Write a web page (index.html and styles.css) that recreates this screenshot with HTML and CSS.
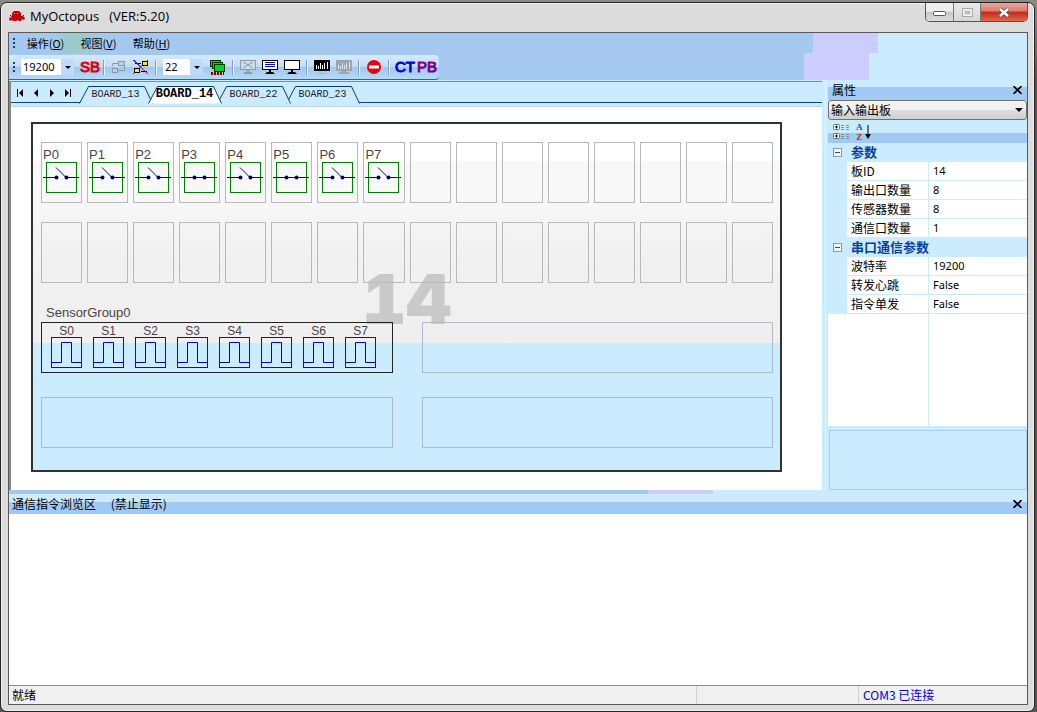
FILE: index.html
```html
<!DOCTYPE html>
<html lang="zh-CN">
<head>
<meta charset="utf-8">
<title>MyOctopus</title>
<link rel="stylesheet" href="styles.css">
</head>
<body>
<svg class="defs" aria-hidden="true">
  <symbol id="sw-open" viewBox="0 0 36 31">
    <rect x="3.5" y="0.5" width="30" height="30" fill="none" stroke="#008000"/>
    <path d="M0 15.5H13M23 15.5H36M13 5.5L23 15.5" fill="none" stroke="#0000a8"/>
    <circle cx="13.5" cy="15.5" r="2" fill="#000060"/><circle cx="23.5" cy="15.5" r="2" fill="#000060"/>
  </symbol>
  <symbol id="sw-closed" viewBox="0 0 36 31">
    <rect x="3.5" y="0.5" width="30" height="30" fill="none" stroke="#008000"/>
    <path d="M0 15.5H36" stroke="#0000a8"/>
    <circle cx="13.5" cy="15.5" r="2" fill="#000060"/><circle cx="23.5" cy="15.5" r="2" fill="#000060"/>
  </symbol>
  <symbol id="pulse" viewBox="0 0 31 31">
    <rect x="0.5" y="0.5" width="30" height="30" fill="none" stroke="#222"/>
    <path d="M1 25.5H10.5V5.5H20.5V25.5H30" fill="none" stroke="#0000d0"/>
  </symbol>
  <symbol id="tab" viewBox="0 0 75 18">
    <path d="M1.5 17.5L10.5 0.5H66.5L74.5 17.5" stroke="#003c8c"/>
  </symbol>
</svg>
<div class="window">
  <header class="titlebar">
    <svg class="logo" width="16" height="12" viewBox="0 0 16 12">
      <path d="M5 1h5l2 2v3h2l2 2-1 2-2-1-1 2h-2l-1-1-2 1H4l-1-1-2 1-1-2 1-2 2 1V3z" fill="#c8000c"/>
      <path d="M1 5l2 2M15 5l-2 2M3 10l2-2M8 10V8M12 10l-2-2" stroke="#800008" fill="none"/>
      <path d="M5 3h1v1H5zM8 3h1v1H8z" fill="#fff"/>
    </svg>
    <h1>MyOctopus &nbsp; (VER:5.20)</h1>
    <div class="winbtns">
      <button class="wb" aria-label="最小化"><svg width="13" height="5"><rect x=".5" y=".5" width="12" height="4" rx="1" fill="#fff" stroke="#555"/></svg></button>
      <button class="wb wb-max" aria-label="最大化"><svg width="11" height="9"><rect x=".5" y=".5" width="10" height="8" fill="#eee" stroke="#aaa"/><rect x="3.5" y="3.5" width="4" height="2" fill="#ddd" stroke="#aaa"/></svg></button>
      <button class="wb wb-close" aria-label="关闭"><svg width="12" height="11" viewBox="0 0 12 11"><path d="M2 2l8 7M10 2l-8 7" stroke="#5b4a4a" stroke-width="4"/><path d="M2 2l8 7M10 2l-8 7" stroke="#fff" stroke-width="2.4"/></svg></button>
    </div>
  </header>
  <div class="client">
    <nav class="menubar">
      <span class="grip"></span>
      <button>操作(<u>O</u>)</button>
      <button>视图(<u>V</u>)</button>
      <button>帮助(<u>H</u>)</button>
    </nav>
    <div class="toolrow">
      <div class="toolbar">
        <span class="grip"></span>
        <div class="combo wide"><select aria-label="波特率"><option>19200</option></select><span class="arrow"></span></div>
        <button class="txt red">SB</button>
        <span class="sep"></span>
        <button aria-label="连接"><svg width="16" height="16"><g fill="#c4d0dc" stroke="#8b98a8"><rect x="7.5" y="2.5" width="6" height="4"/><rect x="1.5" y="9.5" width="5" height="4"/></g><path d="M2 4.500h5M1.500 7v-2.500M13.500 7v4.500h-6" fill="none" stroke="#8b98a8"/></svg></button>
        <button aria-label="断开"><svg width="16" height="16"><path d="M2 4.500h6M8 12.500h6" stroke="#000"/><path d="M0 1l15 14M15 1L0 15" stroke="#d00020"/><path d="M1 1l7 7" stroke="#2020c0"/><rect x="9.500" y="2.500" width="5" height="4" fill="#ffe800" stroke="#000"/><rect x="1.500" y="9.500" width="5" height="4" fill="#ffe800" stroke="#000"/></svg></button>
        <span class="sep"></span>
        <div class="combo"><select aria-label="板号"><option>22</option></select><span class="arrow"></span></div>
        <button aria-label="板卡"><svg width="16" height="16"><g fill="#00d818" stroke="#003800"><rect x=".5" y="1.500" width="10" height="6"/><rect x="2.500" y="3.500" width="10" height="6"/><rect x="4.500" y="5.500" width="10" height="7"/></g><path d="M1 14.500h13" stroke="#900000" stroke-width="3" stroke-dasharray="2 1"/></svg></button>
        <span class="sep"></span>
        <button aria-label="清除"><svg width="16" height="16"><rect x=".5" y="1.500" width="15" height="9" fill="#cbdde9" stroke="#8c9aa5"/><path d="M3 3l10 6M13 3L3 9M7 11v2h2v-2" fill="none" stroke="#8c9aa5"/><path d="M5 13h6l2 2H3z" fill="#8c9aa5"/></svg></button>
        <button aria-label="显示"><svg width="16" height="16"><rect x=".5" y="1.500" width="15" height="9" fill="#fff" stroke="#000"/><path d="M3 3.500h10M3 5.500h10M3 7.500h10" stroke="#0000d0"/><path d="M7 11h2v2h2l2 2H3l2-2h2z" fill="#000"/></svg></button>
        <button aria-label="空屏"><svg width="16" height="16"><rect x=".5" y="1.500" width="15" height="9" fill="#fff" stroke="#000"/><path d="M7 11h2v2h2l2 2H3l2-2h2z" fill="#000"/></svg></button>
        <span class="sep"></span>
        <button aria-label="波形"><svg width="16" height="16"><path d="M0 1h16v11H0z"/><path d="M2.500 10V6M4.500 10V7M6.500 10V4M8.500 10V6M10.500 10V4M13.500 10V3" stroke="#fff"/><path d="M4 14.500h8" stroke="#a8b6c8"/></svg></button>
        <button aria-label="停止波形"><svg width="16" height="16"><path d="M0 1h16v11H0zM6 12h4v1h3v2H3v-2h3z" fill="#9aa5b2"/><path d="M2.500 10V6M4.500 10V7M6.500 10V4M8.500 10V6M10.500 10V4M13.500 10V3" stroke="#dce8f0"/></svg></button>
        <span class="sep"></span>
        <button aria-label="禁止"><svg width="16" height="16"><circle cx="8" cy="8" r="7" fill="#e8000c"/><path d="M3 6.500h10v3H3z" fill="#fff"/></svg></button>
        <span class="sep"></span>
        <button class="txt blue">CT</button>
        <button class="txt purple">PB</button>
      </div>
    </div>
    <div class="workspace">
      <section class="doc">
        <div class="tabstrip">
          <div class="pager">
            <button aria-label="第一页"><svg width="8" height="8"><path d="M1 0h1v8H1zM7 0v8L3 4z"/></svg></button>
            <button aria-label="上一页"><svg width="8" height="8"><path d="M6 0v8L2 4z"/></svg></button>
            <button aria-label="下一页"><svg width="8" height="8"><path d="M2 0v8l4-4z"/></svg></button>
            <button aria-label="最后一页"><svg width="8" height="8"><path d="M1 0v8l4-4zM6 0h1v8H6z"/></svg></button>
          </div>
          <div class="tabs">
            <button class="tab t1"><svg><use href="#tab"/></svg><span>BOARD_13</span></button>
            <button class="tab active"><svg><use href="#tab"/></svg><span>BOARD_14</span></button>
            <button class="tab t3"><svg><use href="#tab"/></svg><span>BOARD_22</span></button>
            <button class="tab t4"><svg><use href="#tab"/></svg><span>BOARD_23</span></button>
          </div>
        </div>
        <div class="canvas">
          <div class="board">
            <div class="mark">14</div>
            <div class="ports">
              <div class="port">P0<svg><use href="#sw-open"/></svg></div>
              <div class="port">P1<svg><use href="#sw-open"/></svg></div>
              <div class="port">P2<svg><use href="#sw-open"/></svg></div>
              <div class="port">P3<svg><use href="#sw-closed"/></svg></div>
              <div class="port">P4<svg><use href="#sw-open"/></svg></div>
              <div class="port">P5<svg><use href="#sw-closed"/></svg></div>
              <div class="port">P6<svg><use href="#sw-open"/></svg></div>
              <div class="port">P7<svg><use href="#sw-open"/></svg></div>
              <div class="port"></div><div class="port"></div><div class="port"></div><div class="port"></div>
              <div class="port"></div><div class="port"></div><div class="port"></div><div class="port"></div>
              <div class="port"></div><div class="port"></div><div class="port"></div><div class="port"></div>
              <div class="port"></div><div class="port"></div><div class="port"></div><div class="port"></div>
              <div class="port"></div><div class="port"></div><div class="port"></div><div class="port"></div>
              <div class="port"></div><div class="port"></div><div class="port"></div><div class="port"></div>
            </div>
            <div class="group-name">SensorGroup0</div>
            <div class="groups">
              <div class="group used">
                <div class="sensor">S0<svg><use href="#pulse"/></svg></div>
                <div class="sensor">S1<svg><use href="#pulse"/></svg></div>
                <div class="sensor">S2<svg><use href="#pulse"/></svg></div>
                <div class="sensor">S3<svg><use href="#pulse"/></svg></div>
                <div class="sensor">S4<svg><use href="#pulse"/></svg></div>
                <div class="sensor">S5<svg><use href="#pulse"/></svg></div>
                <div class="sensor">S6<svg><use href="#pulse"/></svg></div>
                <div class="sensor">S7<svg><use href="#pulse"/></svg></div>
              </div>
              <div class="group"></div>
              <div class="group"></div>
              <div class="group"></div>
            </div>
          </div>
        </div>
      </section>
      <aside class="props">
        <div class="panel-head"><h2>属性</h2><button class="x" aria-label="关闭属性"><svg width="9" height="8"><path d="M.5 0l8 8M8.500 0l-8 8" stroke="#000" stroke-width="1.600"/></svg></button></div>
        <div class="picker"><select aria-label="对象"><option>输入输出板</option></select><span class="arrow"></span></div>
        <div class="prop-tools">
          <button aria-label="按分类"><svg width="18" height="17"><g fill="#fff" stroke="#66707c"><rect x="1.500" y="1.500" width="6" height="5" rx="1"/><rect x="1.500" y="10.500" width="6" height="5" rx="1"/></g><path d="M3 4h3M4.500 2.500v3M3 13h3M4.500 11.500v3" stroke="#000"/><path d="M9 2.500h8M9 4.500h8M9 6.500h8M9 11.500h8M9 13.500h8M9 15.500h8" stroke="#7c8fa4" stroke-dasharray="3 2"/></svg></button>
          <button class="az" aria-label="按字母"><span class="letters"><b class="a">A</b><b class="z">Z</b></span><svg width="6" height="16"><path d="M3 1v11" stroke="#000"/><path d="M0 10h6l-3 5z"/></svg></button>
        </div>
        <div class="grid">
          <table>
            <colgroup><col class="c-gut"><col class="c-name"><col></colgroup>
            <tr class="cat"><th class="gut"><button aria-label="折叠"></button></th><th colspan="2">参数</th></tr>
            <tr><td class="gut"></td><th>板ID</th><td>14</td></tr>
            <tr><td class="gut"></td><th>输出口数量</th><td>8</td></tr>
            <tr><td class="gut"></td><th>传感器数量</th><td>8</td></tr>
            <tr><td class="gut"></td><th>通信口数量</th><td>1</td></tr>
            <tr class="cat"><th class="gut"><button aria-label="折叠"></button></th><th colspan="2">串口通信参数</th></tr>
            <tr><td class="gut"></td><th>波特率</th><td>19200</td></tr>
            <tr><td class="gut"></td><th>转发心跳</th><td>False</td></tr>
            <tr><td class="gut"></td><th>指令单发</th><td>False</td></tr>
          </table>
        </div>
        <div class="desc"></div>
      </aside>
    </div>
    <section class="log">
      <div class="log-band"></div>
      <div class="panel-head log-head"><h2>通信指令浏览区 <span>(禁止显示)</span></h2><button class="x" aria-label="关闭浏览区"><svg width="9" height="8"><path d="M.5 0l8 8M8.500 0l-8 8" stroke="#000" stroke-width="1.600"/></svg></button></div>
    </section>
    <footer class="status"><span class="ready">就绪</span><span class="mid"></span><span class="com">COM3 已连接</span></footer>
  </div>
</div>
</body>
</html>
```
FILE: styles.css
```css
* { box-sizing: border-box; }
html, body { height: 100%; }
body {
  margin: 0;
  padding: 2px 2px 0 0;
  display: flex;
  background: linear-gradient(to bottom, #8a8a86 0, #777 30px, #555 80px, #555 100%);
  font: 12px/18px "Noto Sans CJK SC", "Noto Sans", sans-serif;
  color: #000;
  overflow: hidden;
}
.defs { position: absolute; width: 0; height: 0; }
button { padding: 0; border: 0; background: none; font: inherit; color: inherit; display: flex; align-items: center; justify-content: center; }
select { appearance: none; border: 0; padding: 0; margin: 0; background: none; font: inherit; color: inherit; }
h1, h2 { margin: 0; font-weight: normal; }
h2 { font-size: 12px; }

.window {
  flex: 1;
  display: flex;
  flex-direction: column;
  border: 1px solid #222;
  border-radius: 7px;
  background: #dcdcdc;
  box-shadow: inset 0 0 0 1px #f6f6f6;
  padding: 0 6px 6px 7px;
}
.titlebar { display: flex; align-items: flex-start; height: 29px; }
.logo { margin: 7px 5px 0 1px; }
.titlebar h1 { flex: 1; font: 13px/18px "Open Sans", "Noto Sans", sans-serif; padding-top: 4px; }
.winbtns { display: flex; border: 1px solid #555; border-top: 0; border-radius: 0 0 5px 5px; overflow: hidden; }
.wb { width: 28px; height: 18px; background: linear-gradient(#eee 0 45%, #c6c6c6 50%, #ddd); border-right: 1px solid #777; }
.wb svg { margin-top: 3px; }
.wb-max { width: 27px; background: linear-gradient(#eaeaea, #d6d6d6); }
.wb-max svg { margin-top: 0; }
.wb-close { width: 46px; border: 0; background: linear-gradient(#e8a89c 0, #dc7c6c 45%, #c22a18 50%, #e0684c); }
.wb-close svg { margin-top: 0; }

.client { flex: 1; min-height: 0; display: flex; flex-direction: column; border: 1px solid #5a5a5a; background: #cbecff; }
.grip { width: 2px; height: 11px; background: repeating-linear-gradient(#1c3e78 0 2px, transparent 2px 4px); flex: none; }
.menubar {
  display: flex; align-items: center; height: 20px; padding-left: 4px;
  background: linear-gradient(90deg, #a5c8ee 0 40px, #9bcbc8 60px 70px, #a5c8ee 90px 795px, #a3cbee 804px, #ccccff 804px 869px, #cbecff 869px);
}
.menubar button { margin-left: 10px; width: 41px; white-space: nowrap; font-size: 11px; }
.menubar button + button { margin-left: 12px; }
.toolrow { display: flex; height: 27px; padding-top: 2px; background: linear-gradient(90deg, #a5c8ee 0 795px, #ccccff 795px 860px, #cbecff 860px); }
.toolbar {
  display: flex; align-items: center; width: 430px; padding-left: 4px; height: 25px;
  border-radius: 0 4px 4px 0; border-bottom: 1px solid #2f62ac;
  background: linear-gradient(#d3eafe 0, #c3dcf6 50%, #a2c8ee 52%, #b5daf6 100%);
}
.toolbar button { width: 16px; height: 16px; margin-right: 6px; flex: none; }
.combo { display: flex; flex: none; align-items: center; height: 16px; width: 40px; margin-right: 7px; background: #fff; font: 11px/16px "Noto Sans", sans-serif; }
.combo select { flex: 1; min-width: 0; padding-left: 2px; }
.combo .arrow { width: 13px; height: 16px; background: #bcdcfa; }
.combo.wide { width: 53px; margin-left: 6px; }
.arrow { display: flex; align-items: center; justify-content: center; }
.arrow::before { content: ""; border: 3px solid transparent; border-top-color: #000; border-bottom: 0; }
.sep { width: 1px; height: 15px; background: #7f9fc8; margin-right: 7px; box-shadow: 1px 0 #e8f4ff; flex: none; }
.toolbar .txt { font: 15px/18px "Liberation Sans", sans-serif; width: 18px; height: 18px; margin-right: 4px; -webkit-text-stroke: 1px; }
.toolbar .red { color: #e00018; }
.toolbar .blue { color: #0000d8; }
.toolbar .purple { color: #800080; }

.workspace { display: flex; height: 410px; flex: none; }
.doc { flex: 1; min-width: 0; display: flex; flex-direction: column; border: solid #888; border-width: 1px 0 0 2px; margin: 1px 3px 0 0; background: #fff; }
.tabstrip { display: flex; height: 25px; padding-top: 4px; background: linear-gradient(#cbecff 0 20px, #0a3f94 20px 21px, #cbecff 21px 24px, #b5d6ea 24px); }
.pager { display: flex; padding-left: 5px; width: 70px; gap: 8px; height: 14px; }
.pager button { width: 8px; height: 14px; }
.tabs { display: flex; isolation: isolate; }
.tab { position: relative; width: 69px; height: 17px; font: 10px/17px "Liberation Mono", monospace; color: #222; }
.tab svg { position: absolute; left: -3px; top: 0; width: 75px; height: 18px; fill: #cbecff; z-index: -1; }
.t1 { z-index: 3; } .t3 { z-index: 2; } .t4 { z-index: 1; }
.active { z-index: 4; font-size: 12px; font-weight: bold; color: #000; }
.active svg { fill: #fff; }
.canvas { flex: 1; padding: 15px 40px 17px 20px; }
.board {
  position: relative; height: 350px; border: 2px solid #2e3338; padding: 18px 7px 0 8px;
  background: linear-gradient(#fff 0 37px, #f8f8f8 37px 70px, #f1f1f1 130px, #efefef 219px, #cbecff 219px);
  font: 13px/15px "Liberation Sans", sans-serif; color: #4a4444;
}
.mark { position: absolute; left: 0; right: 0; top: 139px; text-align: center; font: 900 69px/72px Inter, "Liberation Sans", sans-serif; font-variant-numeric: tabular-nums; color: #c9c9c9; }
.ports { position: relative; display: grid; grid-template-columns: repeat(16, 1fr); gap: 19px 5px; }
.port { height: 61px; border: 1px solid #b9b9b9; padding: 4px 1px 0; }
.port svg { display: block; width: 36px; height: 31px; }
.group-name { position: relative; padding: 22px 5px 0; height: 39px; }
.groups { position: relative; display: grid; grid-template-columns: 1fr 1fr; gap: 24px 29px; }
.group { height: 51px; border: 1px solid #b0bcc4; }
.used { display: flex; gap: 11px; padding: 2px 9px; border-color: #222; font-size: 12px; line-height: 12px; text-align: center; }
.sensor { width: 31px; }
.sensor svg { display: block; width: 31px; height: 31px; }

.props { width: 202px; flex: none; display: flex; flex-direction: column; border-left: 1px solid #e8f6ff; padding-left: 2px; }
.panel-head { display: flex; align-items: center; justify-content: space-between; height: 20px; padding: 0 5px 0 4px; background: linear-gradient(#cbecff 0 7px, #a0c9f4 7px); }
.x { width: 9px; height: 18px; }
.picker { display: flex; align-items: center; height: 20px; border: 1px solid #707070; border-radius: 3px; background: linear-gradient(#f2f2f2 0 50%, #dedede 50%, #cfcfcf); }
.picker select { flex: 1; padding-left: 2px; }
.picker .arrow { width: 14px; }
.picker .arrow::before { border-width: 4px 4px 0; }
.prop-tools { display: flex; gap: 6px; align-items: center; height: 23px; padding-left: 4px; background: linear-gradient(#cbecff 0 13px, #a0c9f4 13px); }
.letters { display: flex; flex-direction: column; font: bold 9px/10px "Liberation Serif", serif; }
.a { color: #1d4fa8; } .z { color: #b03020; }
.az { gap: 2px; }
.grid { height: 283px; background: linear-gradient(90deg, #fff 0 100px, #cbecff 100px 101px, #fff 101px); }
.grid table { width: 100%; border-collapse: separate; border-spacing: 0; table-layout: fixed; }
.c-gut { width: 19px; }
.c-name { width: 82px; }
.grid tr { height: 19px; }
.grid th, .grid td { padding: 0 0 0 4px; height: 19px; line-height: 18px; text-align: left; font-weight: normal; border-bottom: 1px solid #cbecff; white-space: nowrap; }
.grid th:nth-child(2) { border-right: 1px solid #cbecff; }
.grid td:last-child { font: 11px/18px "Noto Sans", sans-serif; }
.grid .gut { background: #cbecff; padding: 0; }
.grid .cat th { background: #cbecff; color: #0a3f9c; font-weight: bold; font-size: 13px; }
.gut button { width: 9px; height: 9px; margin-left: 5px; border: 1px solid #8899a8; background: linear-gradient(#444, #444) center / 5px 1px no-repeat #eef8ff; }
.desc { flex: 1; margin: 4px 0 0 1px; border: 1px solid #a9cde2; }

.log { flex: 1; min-height: 0; background: #fff; }
.log-band { height: 4px; background: linear-gradient(90deg, #a5c8e6 0 639px, #ccccf4 639px 704px, #cbecff 704px); }
.log-head { padding-left: 3px; background: linear-gradient(#cbecff 0 8px, #a8c9ee 8px, #9bc9fa 18px); }
.log-head span { margin-left: 12px; }
.status { display: flex; height: 19px; border-top: 1px solid #8c8c88; background: #f0f0f0; line-height: 18px; }
.ready { flex: 1; padding-left: 3px; }
.mid { width: 162px; border-left: 1px solid #d0d0d0; }
.com { width: 169px; padding-left: 4px; border-left: 1px solid #d0d0d0; color: #0000e0; }
```
